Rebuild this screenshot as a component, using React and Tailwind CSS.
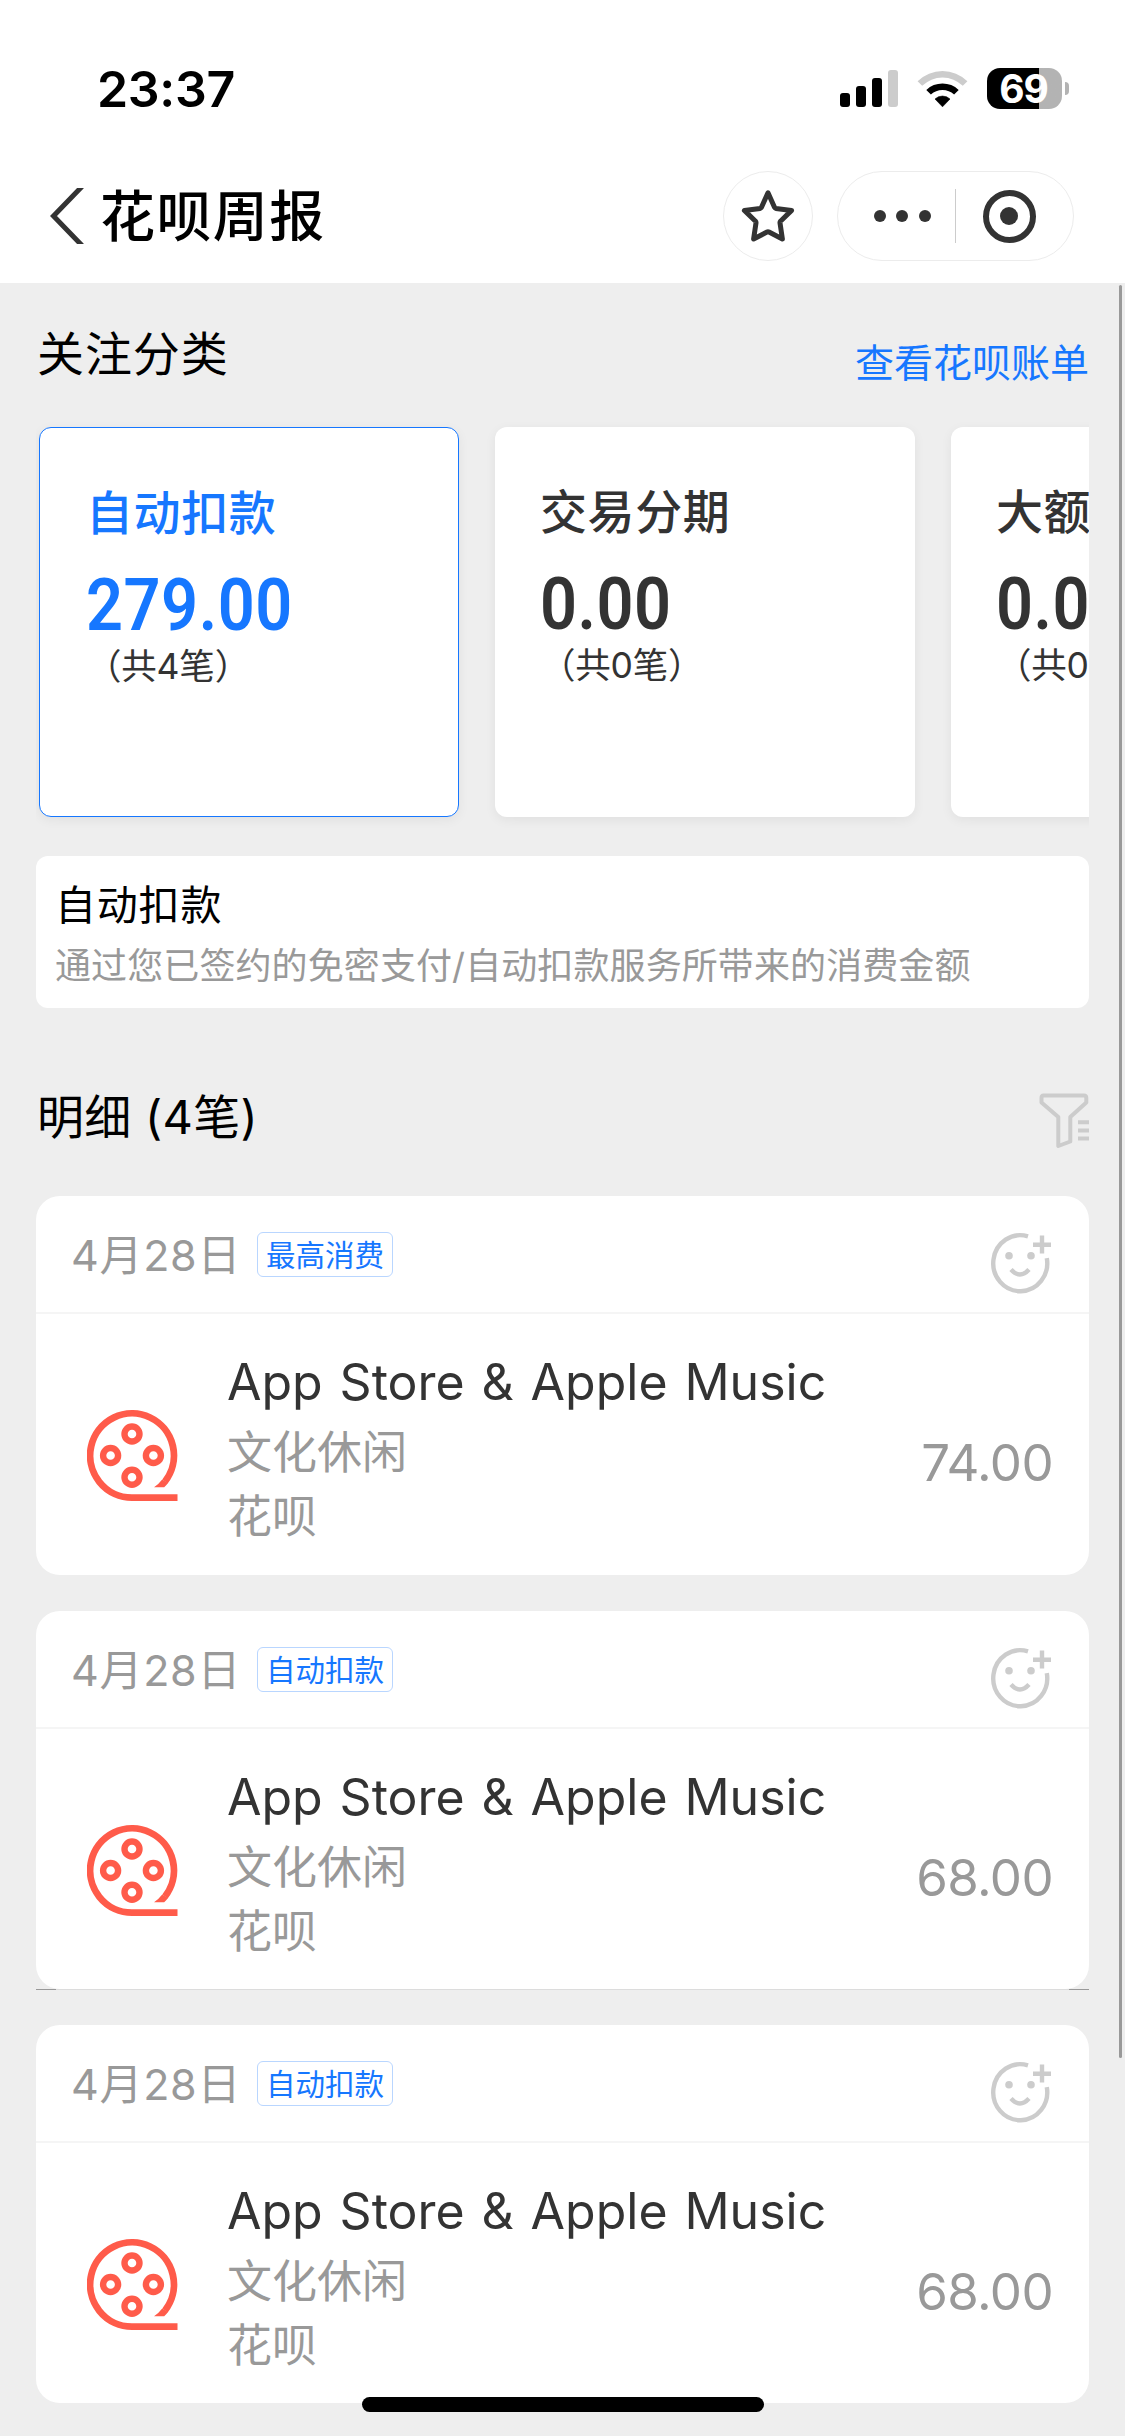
import React from 'react'

const categories = [
  { name: '自动扣款', amount: '279.00', count: '（共4笔）', active: true },
  { name: '交易分期', amount: '0.00', count: '（共0笔）', active: false },
  { name: '大额消费', amount: '0.00', count: '（共0笔）', active: false },
]

const records = [
  { id: 1, date: '4月28日', tag: '最高消费', title: 'App Store & Apple Music', category: '文化休闲', source: '花呗', amount: '74.00' },
  { id: 2, date: '4月28日', tag: '自动扣款', title: 'App Store & Apple Music', category: '文化休闲', source: '花呗', amount: '68.00', divider: true },
  { id: 3, date: '4月28日', tag: '自动扣款', title: 'App Store & Apple Music', category: '文化休闲', source: '花呗', amount: '68.00' },
]

const SignalIcon = () => (
  <svg width="58" height="37" viewBox="0 0 58 37">
    <rect x="0" y="23" width="10" height="14" rx="3" fill="#000" />
    <rect x="16" y="16" width="10" height="21" rx="3" fill="#000" />
    <rect x="32" y="8" width="10" height="29" rx="3" fill="#000" />
    <rect x="48" y="0" width="10" height="37" rx="3" fill="#ccc" />
  </svg>
)

const WifiIcon = () => (
  <svg width="51" height="37" viewBox="0 0 51 37">
    <path d="M0.6 11.2A35.5 35.5 0 0 1 50.4 11.2L45.8 15.8A29 29 0 0 0 5.2 15.8Z" fill="#ccc" />
    <path d="M9.3 20A23.2 23.2 0 0 1 41.7 20L37.1 24.6A16.8 16.8 0 0 0 13.9 24.6Z" fill="#000" />
    <path d="M18 29A11 11 0 0 1 33 29L25.5 36.8Z" fill="#000" stroke="#000" strokeWidth="0.6" strokeLinejoin="round" />
  </svg>
)

const StarIcon = () => (
  <svg width="54" height="54" viewBox="0 0 54 54" fill="none" stroke="#333" strokeWidth="5" strokeLinejoin="round">
    <path d="M27 3.8L33.6 18.5Q34 19.3 34.9 19.4L50.6 21.4L39.5 32.2Q38.9 32.9 39 33.8L41.4 50L28 43Q27 42.5 26 43L12.6 50L15 33.8Q15.1 32.9 14.5 32.2L3.4 21.4L19.1 19.4Q20 19.3 20.4 18.5Z" />
  </svg>
)

const FilterIcon = () => (
  <svg width="50" height="56" viewBox="0 0 50 56" fill="none" stroke="#ccc" strokeWidth="4" strokeLinejoin="round">
    <path d="M4.5 2.5H45Q47.3 2.5 47.3 5V9.5L31.3 24V48.5L19.3 53V24L2.5 9.5V5Q2.5 2.5 4.5 2.5Z" />
    <path d="M39 29.3H50M39 37.5H50M39 45.6H50" />
  </svg>
)

const SmileIcon = () => (
  <svg width="60" height="62" viewBox="0 0 60 62" fill="none" stroke="#ccc" strokeWidth="4.4">
    <path d="M37 4.4A27 28 0 1 0 55.8 26.2" />
    <path d="M42 12.7H60M51 3.6V21.6" />
    <circle cx="18" cy="23.8" r="3.8" fill="#ccc" stroke="none" />
    <circle cx="40" cy="23.8" r="3.8" fill="#ccc" stroke="none" />
    <path d="M20 37.5Q29 47.5 38 37.5" />
  </svg>
)

const FilmIcon = () => (
  <svg width="91" height="92" viewBox="0 0 91 92" fill="none" stroke="#ff5b4a" strokeWidth="6.4">
    <path d="M90.5 87.6H45A41.9 42.1 0 1 1 78 71.5" strokeWidth="6.8" />
    <path d="M75.2 69.6Q72 74 67 77.2H77.2Q79.6 75 81 73Z" fill="#ff5b4a" stroke="none" />
    <circle cx="45" cy="24" r="7.5" />
    <circle cx="23.6" cy="45.5" r="7.5" />
    <circle cx="66.4" cy="45.5" r="7.5" />
    <circle cx="45" cy="67.2" r="7.5" />
  </svg>
)

const StatusBar = () => (
  <div className="flex h-[132px] items-start justify-between pt-[68px] pr-[56px] pl-[97px]">
    <span className="text-[50px] leading-[42px] font-semibold tracking-[-0.3px] text-black">23:37</span>
    <div className="flex items-start">
      <div className="pt-[2px]"><SignalIcon /></div>
      <div className="pt-[2px] pl-[19px]"><WifiIcon /></div>
      <div className="ml-[19px] flex h-[41px] w-[75px] items-center justify-center rounded-[13px] bg-linear-to-r from-black from-[69.3%] to-[#b3b3b3] to-[69.3%] pr-[2px]">
        <span className="text-[39px] leading-[41px] font-bold tracking-[-1px] text-white">69</span>
      </div>
      <div className="mt-[14px] ml-[3px] h-[13px] w-[4px] rounded-r-full bg-[#b3b3b3]" />
    </div>
  </div>
)

const NavBar = () => (
  <div className="flex h-[151px] items-start justify-between pt-[39px] pr-[51px] pl-[50px]">
    <div className="flex h-[90px] items-center">
      <svg width="34" height="56" viewBox="0 0 34 56" fill="none" stroke="#333" strokeWidth="5">
        <path d="M32 -1.5L3.5 28L32 57.5" />
      </svg>
      <h1 className="ml-[16px] text-[55px] leading-[60px] font-medium tracking-[1.4px] text-black">花呗周报</h1>
    </div>
    <div className="flex gap-6">
      <div className="flex size-[90px] items-center justify-center rounded-full border border-[#ececec]">
        <StarIcon />
      </div>
      <div className="flex h-[90px] w-[237px] items-center rounded-full border border-[#ececec]">
        <div className="ml-[36px] flex gap-[10.4px]">
          <span className="size-3 rounded-full bg-[#333]" />
          <span className="size-3 rounded-full bg-[#333]" />
          <span className="size-3 rounded-full bg-[#333]" />
        </div>
        <div className="ml-[24px] h-[54px] w-px bg-[#ccc]" />
        <div className="ml-[27px] flex size-[53px] items-center justify-center rounded-full border-[6px] border-[#333]">
          <span className="size-[18px] rounded-full bg-[#333]" />
        </div>
      </div>
    </div>
  </div>
)

const CategoryCard = ({ item }) => (
  <div
    className={
      item.active
        ? 'h-[390px] w-[420px] shrink-0 rounded-[12px] border border-[#1677ff] bg-white pt-[61px] pl-[46px] text-[#1677ff] shadow-[0_3px_12px_rgba(0,0,0,0.06)]'
        : 'h-[390px] w-[420px] shrink-0 rounded-[12px] bg-white pt-[61px] pl-[45px] text-[#333] shadow-[0_3px_12px_rgba(0,0,0,0.06)]'
    }
  >
    <p className="text-[47px] leading-[48px] font-medium tracking-[0.6px] whitespace-nowrap">{item.name}</p>
    <p className="mt-[33px] w-fit origin-left scale-x-90 font-[Roboto] text-[72px] leading-[72px] font-semibold tracking-[0.6px]">
      {item.amount}
    </p>
    <p className="mt-[7px] text-[35.5px] leading-[36px] tracking-[-0.2px] whitespace-nowrap text-[#333]">{item.count}</p>
  </div>
)

const RecordCard = ({ record }) => (
  <div className="h-[378.4px] rounded-[24px] bg-white">
    <div className="flex h-[118px] items-start justify-between border-b-2 border-[#f5f5f5] pt-[36px] pr-[38px] pl-[35px]">
      <div className="flex">
        <span className="w-[166px] text-[43px] leading-[46px] tracking-[0.7px] whitespace-nowrap text-[#999]">{record.date}</span>
        <span className="ml-[20px] h-[45px] rounded-[6px] border border-[#b9d6ff] px-[8px] text-[29.5px] leading-[44px] text-[#1677ff]">
          {record.tag}
        </span>
      </div>
      <SmileIcon />
    </div>
    <div className="flex items-start pt-[34px] pr-[36px] pl-[51px]">
      <div className="pt-[62px]"><FilmIcon /></div>
      <div className="ml-[49px] flex-1">
        <p className="text-[50px] leading-[68px] [word-spacing:2.8px] whitespace-nowrap text-[#333]">{record.title}</p>
        <p className="mt-[5px] text-[45px] leading-[64px] text-[#999]">{record.category}</p>
        <p className="text-[45px] leading-[64px] text-[#999]">{record.source}</p>
      </div>
      <span className="pt-[85px] text-[51px] leading-[60px] tracking-[-0.6px] text-[#999]">{record.amount}</span>
    </div>
  </div>
)

const App = () => {
  return (
    <div className="relative h-[2436px] w-[1125px] overflow-hidden bg-[#eee] font-[Inter,'Noto_Sans_CJK_SC',sans-serif]">
      <div className="bg-white">
        <StatusBar />
        <NavBar />
      </div>

      <div className="px-[36px]">
        <div className="flex h-[134px] items-start justify-between">
          <h2 className="pt-[47px] pl-px text-[47px] leading-[48px] tracking-[0.9px] text-black">关注分类</h2>
          <a className="pt-[60px] text-[39px] leading-[40px] text-[#1677ff]">查看花呗账单</a>
        </div>

        <div className="flex h-[419px] gap-[36px] overflow-hidden pt-[10px] pl-[3px]">
          {categories.map((item) => (
            <CategoryCard key={item.name} item={item} />
          ))}
        </div>

        <div className="mt-[20px] h-[152px] rounded-[12px] bg-white pt-[28px] pl-[19px]">
          <p className="text-[41px] leading-[42px] tracking-[0.8px] text-black">自动扣款</p>
          <p className="mt-[22px] text-[36px] leading-[36px] tracking-[0.1px] text-[#999]">
            通过您已签约的免密支付/自动扣款服务所带来的消费金额
          </p>
        </div>

        <div className="flex h-[188.3px] items-start justify-between pt-[85px]">
          <h2 className="pl-px text-[47px] leading-[48px] tracking-[0.3px] text-black">明细 (4笔)</h2>
          <FilterIcon />
        </div>

        <div className="flex flex-col">
          {records.map((record) => (
            <div key={record.id} className="mb-[36px]">
              <RecordCard record={record} />
              {record.divider ? (
                <div className="-mb-px flex h-px justify-between bg-[#dcdcdc]">
                  <span className="w-5 bg-[#999]" />
                  <span className="w-5 bg-[#999]" />
                </div>
              ) : null}
            </div>
          ))}
        </div>
      </div>

      {/* scroll thumb */}
      <div className="absolute top-[285px] right-[3px] h-[1773px] w-[3px] rounded-full bg-[#999]" />
      {/* home indicator */}
      <div className="absolute bottom-[24px] left-[362px] h-[15px] w-[402px] rounded-full bg-black" />
    </div>
  )
}

export default App
